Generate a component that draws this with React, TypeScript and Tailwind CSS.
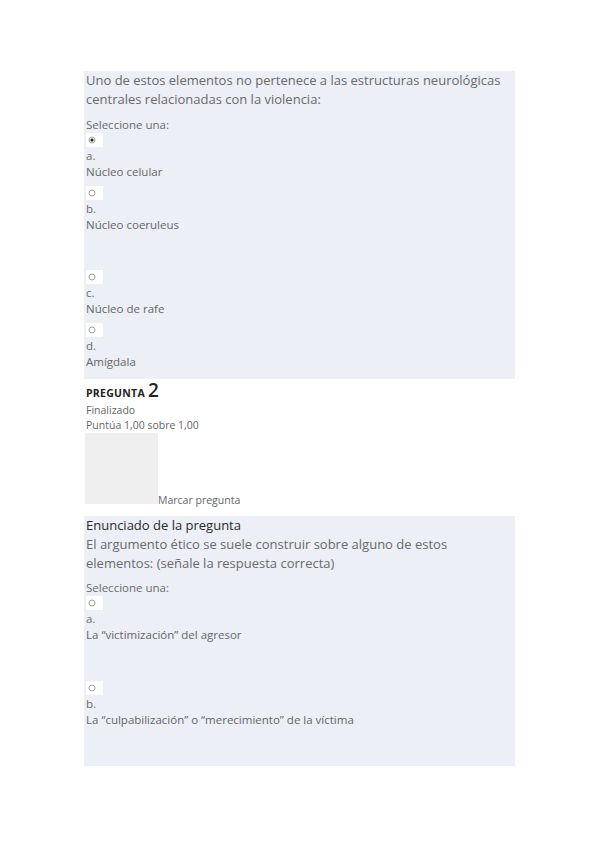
import React from "react";

type Opt = { letter: string; text: string; checked?: boolean; after?: string };

function Radio({ checked }: { checked?: boolean }) {
  return (
    <div className="w-[17px] h-[14px] bg-white flex items-center pl-[2px]">
      <svg width="8" height="8" viewBox="0 0 8 8">
        <circle cx="4" cy="4" r="3" fill="white" stroke="#888" strokeWidth="0.8" />
        {checked && <circle cx="4" cy="4" r="1.6" fill="#222" />}
      </svg>
    </div>
  );
}

function Option({ o }: { o: Opt }) {
  return (
    <div className={o.after ?? "pb-[6px]"}>
      <Radio checked={o.checked} />
      <div className="text-[11.5px] leading-4 text-[#6b6b6b] mt-px">{o.letter}</div>
      <div className="text-[11.5px] leading-4 text-[#666]">{o.text}</div>
    </div>
  );
}

const q1: Opt[] = [
  { letter: "a.", text: "Núcleo celular", checked: true },
  { letter: "b.", text: "Núcleo coeruleus", after: "pb-[37px]" },
  { letter: "c.", text: "Núcleo de rafe" },
  { letter: "d.", text: "Amígdala", after: "pb-[9px]" },
];

const q2: Opt[] = [
  { letter: "a.", text: "La “victimización” del agresor", after: "pb-[38px]" },
  { letter: "b.", text: "La “culpabilización” o “merecimiento” de la víctima", after: "pb-[38px]" },
];

export default function App() {
  return (
    <div
      className="min-h-screen bg-white pt-[71px] pl-[84px]"
      style={{ fontFamily: "'Open Sans', 'Noto Sans', sans-serif" }}
    >
      <div className="w-[431px]">
        <div className="bg-[#eceff6] pl-[2px]">
          <p className="text-[13px] leading-[19px] text-[#6a6a6a] pr-2">
            Uno de estos elementos no pertenece a las estructuras neurológicas centrales relacionadas con la violencia:
          </p>
          <div className="text-[11.5px] leading-4 text-[#6b6b6b] mt-[8px]">Seleccione una:</div>
          {q1.map((o) => (
            <Option key={o.letter} o={o} />
          ))}
        </div>

        <div className="pl-[2px]">
          <div className="flex items-baseline gap-[3px] leading-[22px]">
            <span className="text-[10.5px] font-bold tracking-wide text-[#222]">PREGUNTA</span>
            <span className="text-[19px] font-semibold text-[#222]">2</span>
          </div>
          <div className="text-[10.5px] leading-[15px] text-[#666] mt-[-1px]">Finalizado</div>
          <div className="text-[10.5px] leading-[15px] text-[#666]">Puntúa 1,00 sobre 1,00</div>
        </div>
        <div className="flex items-end pl-px">
          <div className="w-[73px] h-[71px] bg-[#efefef]" />
          <span className="text-[10.5px] leading-[13px] text-[#666] mb-[-3px]">Marcar pregunta</span>
        </div>

        <div className="bg-[#eceff6] pl-[2px] mt-[12px]">
          <div className="text-[13px] leading-[18px] text-[#2a2a2a]">Enunciado de la pregunta</div>
          <p className="text-[13px] leading-[19px] text-[#6a6a6a] mt-px">
            El argumento ético se suele construir sobre alguno de estos elementos: (señale la respuesta correcta)
          </p>
          <div className="text-[11.5px] leading-4 text-[#6b6b6b] mt-[7px]">Seleccione una:</div>
          {q2.map((o) => (
            <Option key={o.letter} o={o} />
          ))}
        </div>
      </div>
    </div>
  );
}
